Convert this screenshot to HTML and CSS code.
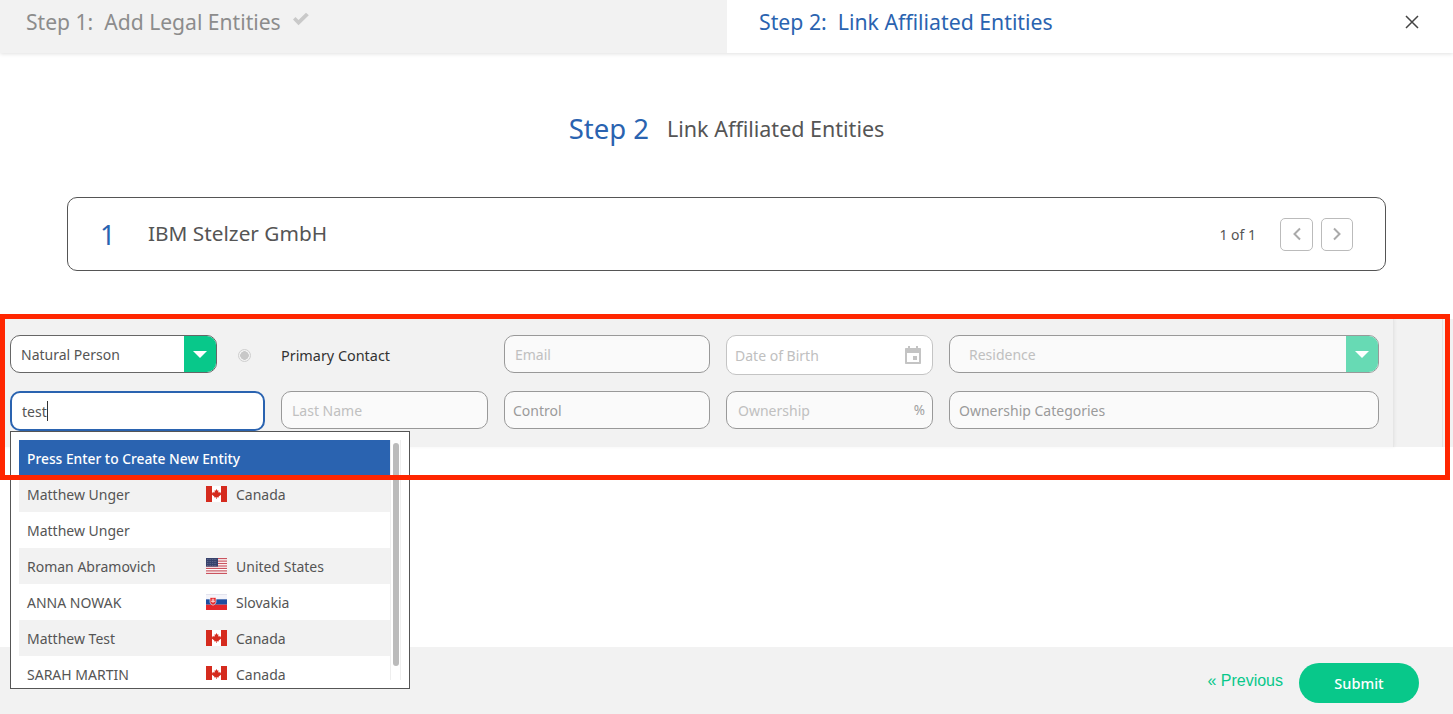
FILE: index.html
```html
<!DOCTYPE html>
<html lang="en">
<head>
    <meta charset="UTF-8">
    <meta name="viewport" content="width=device-width, initial-scale=1.0">
    <title>Link Affiliated Entities</title>
    <link rel="stylesheet" href="styles.css">
</head>
<body>
    <svg class="defs" width="0" height="0">
        <symbol id="flag-ca" viewBox="0 0 21 16">
            <rect width="21" height="16" fill="#fff"/>
            <rect width="6" height="16" fill="#d52b1e"/>
            <rect x="15" width="6" height="16" fill="#d52b1e"/>
            <path d="M10.5 3l1 1.8 1-.5-.4 2.4 1.2-1 .4 1 1.5-.2-.5 1.6.6.4-2.6 2-.1 1-1.8-.3V13h-.6v-1.8l-1.800.3-.1-1-2.600-2 .6-.4-.5-1.600 1.500.2.4-1 1.200 1-.4-2.400 1 .5z" fill="#d52b1e"/>
        </symbol>
        <symbol id="flag-us" viewBox="0 0 21 16">
            <rect width="21" height="16" fill="#fff"/>
            <rect y="0" width="21" height="1.200" fill="#c9545f"/>
            <rect y="2.500" width="21" height="1.200" fill="#c9545f"/>
            <rect y="4.900" width="21" height="1.200" fill="#c9545f"/>
            <rect y="7.400" width="21" height="1.200" fill="#c9545f"/>
            <rect y="9.800" width="21" height="1.200" fill="#c9545f"/>
            <rect y="12.300" width="21" height="1.200" fill="#c9545f"/>
            <rect y="14.800" width="21" height="1.200" fill="#c9545f"/>
            <rect width="12" height="8.600" fill="#37426c"/>
            <path d="M1 1.500h10M1 3.500h10M1 5.500h10M1 7.500h10" stroke="#8f96b4" stroke-width=".6" stroke-dasharray=".7 1" fill="none"/>
        </symbol>
        <symbol id="flag-sk" viewBox="0 0 21 16">
            <rect width="21" height="5.300" fill="#f4f4fa"/>
            <rect width="21" height=".6" fill="#d9d9e6"/>
            <rect y="5.300" width="21" height="5.400" fill="#1f4ea1"/>
            <rect y="10.700" width="21" height="5.300" fill="#e5262b"/>
            <path d="M4 3.500h6v4.500c0 1.500-1.500 2.500-3 3.200-1.500-.7-3-1.700-3-3.200z" fill="#e5262b" stroke="#fff" stroke-width=".6"/>
            <path d="M7 4.500v4.500M5.500 6h3M5 7.400h4" stroke="#fff" stroke-width=".7"/>
        </symbol>
    </svg>

    <div class="page">
        <header class="tabs">
            <div class="tab tab-done">
                <span>Step 1:&nbsp; Add Legal Entities</span>
                <svg class="tick" width="18" height="14" viewBox="0 0 18 14"><path d="M1 7.500l2.500-2.500 3 3L14 .8 16.800 3.300 6.500 13.200z" fill="#c9c9c9"/></svg>
            </div>
            <div class="tab tab-current">
                <span>Step 2:&nbsp; Link Affiliated Entities</span>
                <svg class="close" width="14" height="14" viewBox="0 0 14 14"><path d="M1 1l12 12M13 1L1 13" stroke="#444" stroke-width="1.500" fill="none"/></svg>
            </div>
        </header>

        <div class="heading">
            <span class="heading-step">Step 2</span>
            <span class="heading-title">Link Affiliated Entities</span>
        </div>

        <section class="entity-card">
            <span class="entity-num">1</span>
            <span class="entity-name">IBM Stelzer GmbH</span>
            <span class="entity-count">1 of 1</span>
            <button class="pager pager-prev"><svg width="10" height="14" viewBox="0 0 10 14"><path d="M8 1.500L2.500 7 8 12.500" stroke="#aaa" stroke-width="2" fill="none"/></svg></button>
            <button class="pager"><svg width="10" height="14" viewBox="0 0 10 14"><path d="M2 1.500L7.500 7 2 12.500" stroke="#aaa" stroke-width="2" fill="none"/></svg></button>
        </section>

        <section class="form-band">
            <div class="form-grid">
                <div class="first-cell">
                    <div class="field select-field">
                        <span class="value">Natural Person</span>
                        <span class="select-btn"><i class="arrow"></i></span>
                    </div>
                    <span class="radio"></span>
                </div>
                <div class="primary-label">Primary Contact</div>
                <div class="field"><span class="placeholder">Email</span></div>
                <div class="field field-date">
                    <span class="placeholder">Date of Birth</span>
                    <svg class="cal" width="20" height="20" viewBox="0 0 20 20"><path d="M5 1h2v2h6V1h2v2h2c.6 0 1 .4 1 1v14c0 .6-.4 1-1 1H3c-.6 0-1-.4-1-1V4c0-.6.4-1 1-1h2zM4 8v9h12V8z" fill="#c4c4c4"/><rect x="10" y="11" width="4" height="4" fill="#c4c4c4"/></svg>
                </div>
                <div class="field select-field select-off">
                    <span class="placeholder residence">Residence</span>
                    <span class="select-btn"><i class="arrow"></i></span>
                </div>

                <div class="field field-focus"><span class="value">test</span><i class="caret"></i></div>
                <div class="field"><span class="placeholder">Last Name</span></div>
                <div class="field field-tight"><span class="filled">Control</span></div>
                <div class="field field-own">
                    <span class="placeholder">Ownership</span>
                    <span class="percent">%</span>
                </div>
                <div class="field field-cats"><span class="filled">Ownership Categories</span></div>
            </div>
            <div class="band-side"></div>

            <div class="dropdown">
                <div class="dropdown-list">
                    <div class="option option-create"><span>Press Enter to Create New Entity</span></div>
                    <div class="option">
                        <span class="opt-name">Matthew Unger</span>
                        <svg class="flag"><use href="#flag-ca"/></svg>
                        <span class="opt-country">Canada</span>
                    </div>
                    <div class="option">
                        <span class="opt-name">Matthew Unger</span>
                    </div>
                    <div class="option">
                        <span class="opt-name">Roman Abramovich</span>
                        <svg class="flag"><use href="#flag-us"/></svg>
                        <span class="opt-country">United States</span>
                    </div>
                    <div class="option">
                        <span class="opt-name">ANNA NOWAK</span>
                        <svg class="flag"><use href="#flag-sk"/></svg>
                        <span class="opt-country">Slovakia</span>
                    </div>
                    <div class="option">
                        <span class="opt-name">Matthew Test</span>
                        <svg class="flag"><use href="#flag-ca"/></svg>
                        <span class="opt-country">Canada</span>
                    </div>
                    <div class="option">
                        <span class="opt-name">SARAH MARTIN</span>
                        <svg class="flag"><use href="#flag-ca"/></svg>
                        <span class="opt-country">Canada</span>
                    </div>
                </div>
                <div class="scroll-track"><div class="scroll-thumb"></div></div>
            </div>
        </section>

        <div class="spacer"></div>

        <footer class="footer">
            <a class="prev-link">« Previous</a>
            <button class="submit">Submit</button>
        </footer>

        <div class="red-frame"></div>
    </div>
</body>
</html>
```

FILE: styles.css
```css
* {
    box-sizing: border-box;
}

body {
    margin: 0;
    background: #fff;
    color: #555;
    font-family: "Noto Sans", sans-serif;
    font-size: 14px;
    overflow: hidden;
}

.defs {
    position: absolute;
}

.page {
    position: relative;
    height: 714px;
    display: flex;
    flex-direction: column;
}

/* top tabs */
.tabs {
    display: flex;
    height: 53px;
    flex: none;
    box-shadow: 0 1px 4px rgba(0, 0, 0, 0.12);
    position: relative;
    z-index: 1;
    font-size: 21.250px;
}

.tab {
    display: flex;
    align-items: center;
    height: 100%;
    padding-bottom: 10px;
}

.tab-done {
    width: 727px;
    padding-left: 26px;
    background: #f2f2f2;
    color: #8c8c8c;
    font-size: 21.100px;
}

.tick {
    margin: -6px 0 0 11px;
}

.tab-current {
    flex: 1;
    padding-left: 32px;
    padding-right: 34px;
    background: #fff;
    color: #2a63b0;
    justify-content: space-between;
}

/* page heading */
.heading {
    display: flex;
    justify-content: center;
    align-items: flex-start;
    gap: 18px;
    height: 144px;
    padding-top: 57px;
    flex: none;
    line-height: 38px;
}

.heading-step {
    color: #2a63b0;
    font-size: 27.500px;
}

.heading-title {
    color: #555;
    font-size: 21.500px;
}

/* selected entity */
.entity-card {
    display: flex;
    align-items: center;
    flex: none;
    height: 74px;
    margin: 0 67px;
    padding: 0 32px;
    border: 1px solid #555;
    border-radius: 10px;
}

.entity-num {
    width: 48px;
    color: #2a63b0;
    font-size: 27px;
}

.entity-name {
    flex: 1;
    margin-top: -2px;
    font-size: 20.800px;
    color: #555;
}

.entity-count {
    margin-right: 24px;
    font-size: 14px;
    color: #555;
}

.pager {
    display: flex;
    align-items: center;
    justify-content: center;
    width: 32px;
    height: 33px;
    padding: 0;
    background: #fff;
    border: 1px solid #bbb;
    border-radius: 5px;
}

.pager-prev {
    width: 33px;
    margin-right: 8px;
}

/* form band */
.form-band {
    position: relative;
    display: flex;
    flex: none;
    height: 128px;
    margin-top: 48px;
    background: #f2f2f2;
}

.form-grid {
    display: grid;
    grid-template-columns: 255px 207px 206px 207px 430px;
    grid-template-rows: 38px 38px;
    column-gap: 16px;
    row-gap: 18px;
    align-items: start;
    width: 1394px;
    padding: 16px 0 0 10px;
    border-right: 1px solid #e6e6e6;
    box-shadow: 1px 0 3px rgba(0, 0, 0, 0.05);
}

.band-side {
    width: 49px;
    border-right: 1px solid #e2e2e2;
}

.first-cell {
    display: flex;
    align-items: center;
    height: 38px;
}

.field {
    position: relative;
    display: flex;
    align-items: center;
    height: 38px;
    padding-left: 10px;
    background: #fafafa;
    border: 1px solid #999;
    border-radius: 10px;
    overflow: hidden;
}

.field-tight {
    padding-left: 8px;
}

.field-cats {
    padding-left: 9px;
}

.value {
    color: #555;
}

.placeholder {
    color: #c0c0c0;
}

.filled {
    color: #9b9b9b;
}

.residence {
    padding-left: 9px;
}

.select-field {
    width: 100%;
    justify-content: space-between;
    padding-right: 0;
}

.first-cell .select-field {
    width: 207px;
    background: #fff;
    border-color: #666;
}

.select-btn {
    display: flex;
    align-items: center;
    justify-content: center;
    align-self: stretch;
    width: 32px;
    background: #08c88a;
}

.select-off .select-btn {
    background: #67dab4;
}

.arrow {
    width: 0;
    height: 0;
    border-left: 7px solid transparent;
    border-right: 7px solid transparent;
    border-top: 7px solid #fff;
}

.radio {
    width: 13px;
    height: 13px;
    margin: 2px 0 0 21px;
    border: 1px solid #cfcfcf;
    border-radius: 50%;
    background: radial-gradient(circle, #c8c8c8 0 4px, #f2f2f2 4.500px);
}

.primary-label {
    height: 38px;
    line-height: 42px;
    color: #333;
    font-size: 14.400px;
}

.field-date {
    height: 40px;
    padding-left: 8px;
    background: #fff;
    border-color: #c4c4c4;
    justify-content: space-between;
}

.cal {
    margin: -1px 9px 0 0;
}

.field-own {
    padding-left: 11px;
    justify-content: space-between;
}

.percent {
    margin-right: 7px;
    color: #a0a0a0;
    font-size: 13.500px;
}

.field-focus {
    height: 40px;
    padding-left: 10px;
    background: #fff;
    border: 2px solid #2a63b0;
}

.caret {
    width: 1px;
    height: 20px;
    background: #333;
}

/* dropdown over the band */
.dropdown {
    position: absolute;
    left: 10px;
    top: 112px;
    width: 400px;
    height: 258px;
    padding: 8px;
    display: flex;
    align-items: flex-start;
    background: #fff;
    border: 1px solid #555;
    z-index: 2;
}

.dropdown-list {
    width: 371px;
    height: 240px;
    overflow: hidden;
}

.option {
    display: flex;
    align-items: center;
    height: 36px;
    padding-left: 8px;
    color: #555;
}

.option:nth-child(even) {
    background: #f2f2f2;
}

.option-create {
    background: #2a63b0;
    color: #fff;
    font-size: 13.800px;
    font-weight: 500;
}

.opt-name {
    width: 179px;
}

.flag {
    width: 21px;
    height: 16px;
    margin-right: 9px;
}

.scroll-track {
    width: 11px;
    height: 240px;
    padding: 3px 2px 0 2px;
    border-left: 1px solid #eee;
    border-right: 1px solid #eee;
}

.scroll-thumb {
    width: 6px;
    height: 223px;
    background: #bbb;
    border-radius: 3px;
}

.spacer {
    height: 200px;
    flex: none;
}

/* footer */
.footer {
    display: flex;
    align-items: center;
    justify-content: flex-end;
    flex: 1;
    padding: 4px 34px 0 0;
    background: #f2f2f2;
}

.prev-link {
    margin-right: 16px;
    margin-top: -4px;
    color: #08c88a;
    font-family: "Liberation Sans", sans-serif;
    font-size: 16px;
}

.submit {
    width: 120px;
    height: 40px;
    padding: 0;
    background: #08c88a;
    border: 0;
    border-radius: 20px;
    color: #fff;
    font-family: "Noto Sans", sans-serif;
    font-size: 14.500px;
    font-weight: 500;
}

/* red highlight drawn over the page */
.red-frame {
    position: absolute;
    left: 0;
    top: 314px;
    width: 1450px;
    height: 166px;
    border: 5px solid #ff2600;
    z-index: 3;
    pointer-events: none;
}
```
